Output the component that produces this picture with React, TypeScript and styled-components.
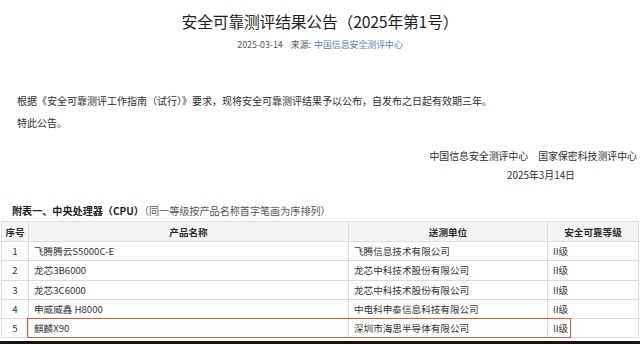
import React from "react";
import styled, { createGlobalStyle } from "styled-components";

type Row = {
  no: number;
  product: string;
  unit: string;
  level: string;
};

const rows: Row[] = [
  { no: 1, product: "飞腾腾云S5000C-E", unit: "飞腾信息技术有限公司", level: "II级" },
  { no: 2, product: "龙芯3B6000", unit: "龙芯中科技术股份有限公司", level: "II级" },
  { no: 3, product: "龙芯3C6000", unit: "龙芯中科技术股份有限公司", level: "II级" },
  { no: 4, product: "申威威鑫 H8000", unit: "中电科申泰信息科技有限公司", level: "II级" },
  { no: 5, product: "麒麟X90", unit: "深圳市海思半导体有限公司", level: "II级" },
];

const App = () => {
  return (
    <Page>
      <GlobalStyle />
      <Title>安全可靠测评结果公告（2025年第1号）</Title>
      <Meta>
        2025-03-14<MetaLabel>来源:</MetaLabel>
        <SourceLink>中国信息安全测评中心</SourceLink>
      </Meta>
      <Body>
        <Para>
          根据《安全可靠测评工作指南（试行）》要求，现将安全可靠测评结果予以公布，自发布之日起有效期三年。
        </Para>
        <Para>特此公告。</Para>
      </Body>
      <Signature>
        <SignLine>
          <span>中国信息安全测评中心</span>
          <span>国家保密科技测评中心</span>
        </SignLine>
        <SignDate>2025年3月14日</SignDate>
      </Signature>
      <SectionTitle>
        <b>附表一、中央处理器（CPU）</b>
        <SectionNote>（同一等级按产品名称首字笔画为序排列）</SectionNote>
      </SectionTitle>
      <TableWrap>
        <Table>
          <colgroup>
            <col style={{ width: 27 }} />
            <col style={{ width: 320 }} />
            <col style={{ width: 199 }} />
            <col style={{ width: 91 }} />
          </colgroup>
          <thead>
            <tr>
              <Th>序号</Th>
              <Th>产品名称</Th>
              <Th>送测单位</Th>
              <Th>安全可靠等级</Th>
            </tr>
          </thead>
          <tbody>
            {rows.map((r) => (
              <tr key={r.no}>
                <Td center>{r.no}</Td>
                <Td>{r.product}</Td>
                <Td>{r.unit}</Td>
                <Td>{r.level}</Td>
              </tr>
            ))}
          </tbody>
        </Table>
        <Highlight />
      </TableWrap>
      <BottomEdge />
    </Page>
  );
};

export default App;

const GlobalStyle = createGlobalStyle`
  html, body {
    margin: 0;
    padding: 0;
    background: #fff;
  }
  body {
    font-family: "Noto Sans CJK SC", "Noto Sans", sans-serif;
    color: #2b2b2b;
  }
`;

const Page = styled.div`
  width: 640px;
  height: 344px;
  overflow: hidden;
  position: relative;
  display: flex;
  flex-direction: column;
`;

const Title = styled.div`
  margin-top: 12px;
  height: 20px;
  line-height: 20px;
  text-align: center;
  font-size: 15.8px;
  color: #1f1f1f;
  letter-spacing: -0.2px;
`;

const Meta = styled.div`
  margin-top: 7px;
  height: 12px;
  line-height: 12px;
  text-align: center;
  font-size: 8.9px;
  color: #555;
`;

const MetaLabel = styled.span`
  margin-left: 8px;
  margin-right: 3px;
`;

const SourceLink = styled.span`
  color: #5b7dc0;
`;

const Body = styled.div`
  margin-top: 39px;
  padding-left: 17px;
`;

const Para = styled.div`
  height: 22px;
  line-height: 22px;
  font-size: 10px;
  color: #2e2e2e;
  white-space: nowrap;
`;

const Signature = styled.div`
  margin-top: 13px;
  display: flex;
  flex-direction: column;
  align-items: flex-end;
  padding-right: 3px;
  font-size: 9.9px;
  color: #2e2e2e;
`;

const SignLine = styled.div`
  display: flex;
  gap: 10px;
  height: 19px;
  line-height: 19px;
`;

const SignDate = styled.div`
  height: 19px;
  line-height: 19px;
  margin-right: 62px;
`;

const SectionTitle = styled.div`
  margin-top: 18px;
  height: 16px;
  line-height: 16px;
  padding-left: 12px;
  font-size: 10.1px;
  color: #1f1f1f;
  white-space: nowrap;
  b {
    font-weight: 700;
  }
`;

const SectionNote = styled.span`
  color: #555;
`;

const TableWrap = styled.div`
  position: relative;
  margin-top: 2px;
  margin-left: 1px;
  width: 637px;
`;

const Table = styled.table`
  width: 637px;
  table-layout: fixed;
  border-collapse: collapse;
  font-size: 9.6px;
  color: #333;
`;

const Th = styled.th`
  height: 19px;
  padding: 0;
  border: 1px solid #dcdcdc;
  background: #f4f4f4;
  font-weight: 700;
  text-align: center;
  color: #2a2a2a;
`;

const Td = styled.td<{ center?: boolean }>`
  height: 18.3px;
  padding: 0 0 0 ${(p) => (p.center ? 0 : 5)}px;
  border: 1px solid #dcdcdc;
  text-align: ${(p) => (p.center ? "center" : "left")};
  white-space: nowrap;
  overflow: hidden;
`;

const Highlight = styled.div`
  position: absolute;
  left: 26px;
  top: 97px;
  width: 544px;
  height: 20px;
  border: 1.5px solid #e0583c;
  box-sizing: border-box;
  pointer-events: none;
`;

const BottomEdge = styled.div`
  position: absolute;
  left: 0;
  right: 0;
  bottom: 0;
  height: 3px;
  background: #141414;
`;
